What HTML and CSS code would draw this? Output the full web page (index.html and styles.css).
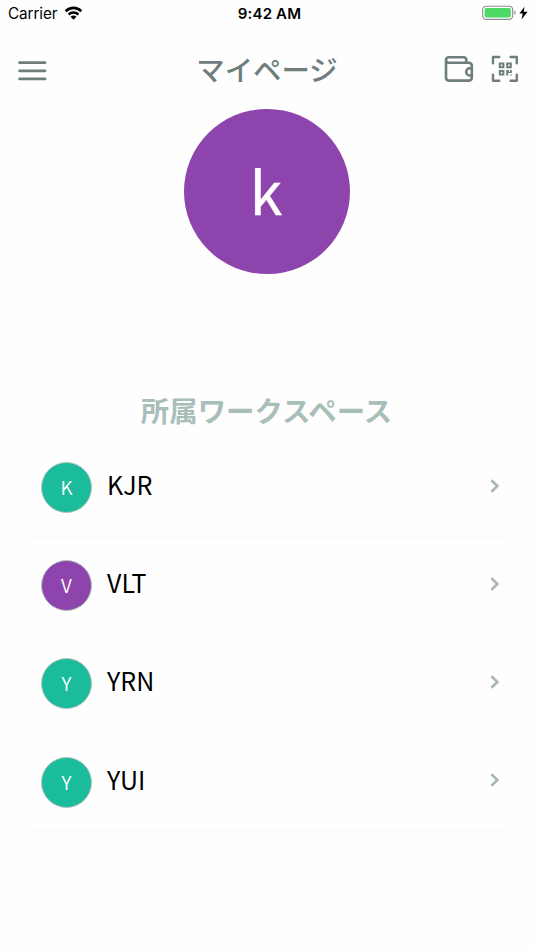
FILE: index.html
```html
<!DOCTYPE html>
<html lang="ja">
<head>
<meta charset="utf-8">
<title>マイページ</title>
<link rel="stylesheet" href="styles.css">
</head>
<body>
<div class="status">
  <div class="status-left">
    <span class="carrier">Carrier</span>
    <svg class="wifi" width="19" height="14" viewBox="0 0 20 14" preserveAspectRatio="none" fill="none" stroke="#000">
      <path d="M1.8 5.2C6.4.7 13.6.7 18.2 5.2" stroke-width="2.7"/>
      <path d="M4.8 8.5C7.7 5.8 12.3 5.8 15.2 8.5" stroke-width="2.5"/>
      <path d="M10 13.8 6.9 10.7C8.7 9.1 11.3 9.1 13.1 10.7Z" fill="#000" stroke="none"/>
    </svg>
  </div>
  <div class="time">9:42 AM</div>
  <div class="status-right">
    <svg width="48" height="16" viewBox="0 0 48 16">
      <rect x=".7" y="1.2" width="30" height="13.2" rx="3.6" fill="#fff" stroke="#8b8b8b" stroke-width="1.1"/>
      <rect x="2.6" y="3" width="26.2" height="9.6" rx="1.8" fill="#4cd964"/>
      <path d="M32.4 5.6C34 6.2 34 9.4 32.4 10Z" fill="#8b8b8b"/>
      <path d="M42.6 1.7 37.4 8.6H40.7L39.5 14.4 45.6 6.8H41.7Z" fill="#000"/>
    </svg>
  </div>
</div>
<header class="header">
  <svg class="menu" width="30" height="22" viewBox="0 0 30 22" stroke="#6e7e7c" stroke-width="2.8" stroke-linecap="round">
    <path d="M2.6 2.7H28M2.6 10.8H28M2.6 18.9H28"/>
  </svg>
  <h1 class="title">マイページ</h1>
  <div class="actions">
    <svg width="30" height="28" viewBox="0 0 30 28" fill="none" stroke="#6e7e7c" stroke-width="2.6" stroke-linejoin="round">
      <path d="M22.3 7.8V5.2Q22.3 2.3 19.4 2.3H5Q2 2.3 2 5.3V22.5Q2 25.6 5 25.6H24.8Q27.8 25.6 27.8 22.6V10.8Q27.8 7.8 24.8 7.8H5Q2.3 7.8 2 5.3"/>
      <path d="M27.8 13.3H25.8A3.6 3.6 0 0 0 25.8 20.5H27.8"/>
    </svg>
    <svg width="28" height="28" viewBox="0 0 28 28" fill="none" stroke="#6e7e7c" stroke-width="2.4">
      <path d="M2 8.2V2H8.2M19.6 2H25.8V8.2M25.8 19.6V25.8H19.6M8.2 25.8H2V19.6" stroke-linecap="round" stroke-linejoin="round"/>
      <path d="M8.8 8.6H12.4V12.2H8.8ZM16.2 8.6H19.8V12.2H16.2ZM8.8 16H12.4V19.6H8.8Z" stroke-width="2"/>
      <path d="M15.2 15H17.8V16.8H19V15H20.8V18H17.2V20.6H15.2ZM19.3 19.2H20.8V20.6H19.3Z" fill="#6e7e7c" stroke="none"/>
    </svg>
  </div>
</header>
<main>
  <div class="profile"><div class="avatar-lg">k</div></div>
  <section class="workspaces">
    <h2 class="section-title">所属ワークスペース</h2>
    <ul class="list">
      <li class="row"><span class="avatar">K</span><span class="name">KJR</span><svg class="chevron" width="12" height="16" viewBox="0 0 12 16"><path d="M2.4 2.3 8.4 8 2.4 13.7"/></svg></li>
      <li class="row"><span class="avatar purple">V</span><span class="name">VLT</span><svg class="chevron" width="12" height="16" viewBox="0 0 12 16"><path d="M2.4 2.3 8.4 8 2.4 13.7"/></svg></li>
      <li class="row"><span class="avatar">Y</span><span class="name">YRN</span><svg class="chevron" width="12" height="16" viewBox="0 0 12 16"><path d="M2.4 2.3 8.4 8 2.4 13.7"/></svg></li>
      <li class="row"><span class="avatar">Y</span><span class="name">YUI</span><svg class="chevron" width="12" height="16" viewBox="0 0 12 16"><path d="M2.4 2.3 8.4 8 2.4 13.7"/></svg></li>
    </ul>
  </section>
</main>
</body>
</html>
```
FILE: styles.css
```css
* { box-sizing: border-box; }
body {
  margin: 0;
  height: 950px;
  overflow: hidden;
  background: #fefefe;
  color: #000;
  font-family: "Noto Sans CJK JP", sans-serif;
}
svg { display: block; flex: none; }
.status {
  display: grid;
  grid-template-columns: 1fr auto 1fr;
  height: 28px;
  padding: 5px 4px 0 8px;
  font: 15.3px/18px Inter, sans-serif;
}
.status-left { display: flex; gap: 7px; }
.carrier { letter-spacing: -.1px; }
.wifi { margin-top: 1px; }
.time { font-weight: 600; font-size: 15px; letter-spacing: .15px; margin-left: 1px; }
.status-right { display: flex; justify-content: flex-end; }
.header {
  display: grid;
  grid-template-columns: 1fr auto 1fr;
  height: 80.5px;
  padding: 0 15px 0 17px;
}
.menu { margin-top: 32px; }
.title {
  margin: 21px 0 0 -2px;
  font-size: 28.4px;
  line-height: 40px;
  font-weight: 500;
  color: #6e7e7c;
}
.actions { display: flex; justify-content: flex-end; gap: 17px; padding-top: 27px; }
.profile { display: flex; justify-content: center; height: 273.5px; }
.avatar-lg {
  width: 165.5px;
  height: 165.5px;
  padding-right: 2px;
  border-radius: 50%;
  background: #8e44ad;
  color: #fff;
  font-size: 59px;
  line-height: 162px;
  text-align: center;
  -webkit-text-stroke: .4px #fff;
}
.workspaces { margin: 0 29px 0 26px; border-top: 1px solid #f8f9f9; }
.section-title {
  margin: 0;
  height: 56px;
  padding-left: 2px;
  font-size: 28.4px;
  line-height: 54px;
  font-weight: 700;
  text-align: center;
  color: #a9bdb9;
}
.list { margin: 0; padding: 0; list-style: none; }
.row {
  display: flex;
  align-items: center;
  height: 98.2px;
  padding-left: 15px;
  border-bottom: 1px solid #f8f9f9;
}
.avatar {
  width: 51px;
  height: 51px;
  margin-right: 15px;
  border: 1px solid #b4c2bf;
  border-radius: 50%;
  background: #1abc9c;
  color: #fff;
  font-size: 19px;
  font-weight: 350;
  line-height: 47px;
  text-align: center;
}
.purple { background: #8e44ad; }
.name { flex: 1; font-size: 25px; line-height: 36px; margin-top: -7px; }
.chevron {
  margin: -4px 4px 0 0;
  fill: none;
  stroke: #a8b7b4;
  stroke-width: 2.6;
}
```
